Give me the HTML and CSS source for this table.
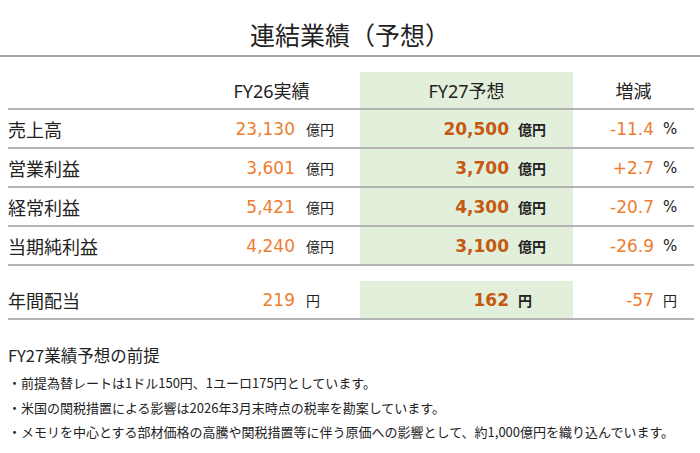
FILE: index.html
```html
<!DOCTYPE html>
<html lang="ja">
<head>
<meta charset="utf-8">
<link rel="stylesheet" href="styles.css">
</head>
<body>
<h1 class="title">連結業績（予想）</h1>
<div class="table">
  <div class="row head">
    <div class="c"></div>
    <div class="c h span2">FY26実績</div>
    <div class="c h span2 g">FY27予想</div>
    <div class="c h span2">増減</div>
  </div>
  <div class="row">
    <div class="c label">売上高</div>
    <div class="c num">23,130</div><div class="c unit">億円</div>
    <div class="c num b g">20,500</div><div class="c unit b g u3">億円</div>
    <div class="c num">-11.4</div><div class="c unit pct">%</div>
  </div>
  <div class="row">
    <div class="c label">営業利益</div>
    <div class="c num">3,601</div><div class="c unit">億円</div>
    <div class="c num b g">3,700</div><div class="c unit b g u3">億円</div>
    <div class="c num">+2.7</div><div class="c unit pct">%</div>
  </div>
  <div class="row">
    <div class="c label">経常利益</div>
    <div class="c num">5,421</div><div class="c unit">億円</div>
    <div class="c num b g">4,300</div><div class="c unit b g u3">億円</div>
    <div class="c num">-20.7</div><div class="c unit pct">%</div>
  </div>
  <div class="row">
    <div class="c label">当期純利益</div>
    <div class="c num">4,240</div><div class="c unit">億円</div>
    <div class="c num b g">3,100</div><div class="c unit b g u3">億円</div>
    <div class="c num">-26.9</div><div class="c unit pct">%</div>
  </div>
  <div class="row div">
    <div class="c label">年間配当</div>
    <div class="c num">219</div><div class="c unit">円</div>
    <div class="c num b g">162</div><div class="c unit b g u3">円</div>
    <div class="c num">-57</div><div class="c unit u4">円</div>
  </div>
</div>
<div class="notes">
  <h2 class="notes-title">FY27業績予想の前提</h2>
  <ul class="list">
    <li>・前提為替レートは1ドル150円、1ユーロ175円としています。</li>
    <li>・米国の関税措置による影響は2026年3月末時点の税率を勘案しています。</li>
    <li>・メモリを中心とする部材価格の高騰や関税措置等に伴う原価への影響として、約1,000億円を織り込んでいます。</li>
  </ul>
</div>
</body>
</html>
```
FILE: styles.css
```css
html, body {
  margin: 0;
  padding: 0;
  background: #ffffff;
}
body {
  width: 700px;
  height: 453px;
  overflow: hidden;
  color: #222222;
  font-family: "Noto Sans", "Noto Sans CJK JP", sans-serif;
}
.title {
  margin: 0;
  padding: 18px 0 3px;
  font-size: 25px;
  line-height: 34px;
  font-weight: 400;
  text-align: center;
  border-bottom: 2px solid #a6a6a6;
}
.table {
  margin: 15px 6px 0 8px;
}
.row {
  display: grid;
  grid-template-columns: 175px 113px 64px 150px 63px 82px 39px;
  height: 37px;
  border-bottom: 2px solid #b4b4b4;
}
.row.head {
  height: 36px;
}
.row.div {
  margin-top: 15px;
}
.c {
  display: flex;
  align-items: center;
  min-width: 0;
  white-space: nowrap;
}
.span2 {
  grid-column: span 2;
}
.h {
  justify-content: center;
  font-size: 18px;
}
.g {
  background: #e2efda;
}
.label {
  font-family: "Noto Sans CJK JP", sans-serif;
  font-size: 18px;
}
.num {
  justify-content: flex-end;
  padding-right: 1px;
  font-family: "DejaVu Sans", sans-serif;
  font-size: 17px;
  color: #ed7d31;
}
.num.b {
  font-weight: 700;
  color: #c65911;
}
.unit {
  padding-left: 10px;
  font-family: "Noto Sans CJK JP", sans-serif;
  font-size: 14px;
}
.unit.b {
  font-weight: 700;
}
.u3, .u4 {
  padding-left: 8px;
}
.pct {
  padding-left: 8px;
  font-family: "DejaVu Sans", sans-serif;
  font-size: 15px;
}
.notes {
  padding: 0 8px;
  margin-top: 23px;
}
.notes-title {
  margin: 0;
  font-size: 16.5px;
  line-height: 24px;
  font-weight: 400;
  font-family: "Noto Sans CJK JP", sans-serif;
}
.list {
  list-style: none;
  margin: 4px 0 0;
  padding: 0;
  font-family: "Noto Sans CJK JP", sans-serif;
  font-size: 13px;
  line-height: 24.5px;
}
.list li {
  margin: 0;
}
```
